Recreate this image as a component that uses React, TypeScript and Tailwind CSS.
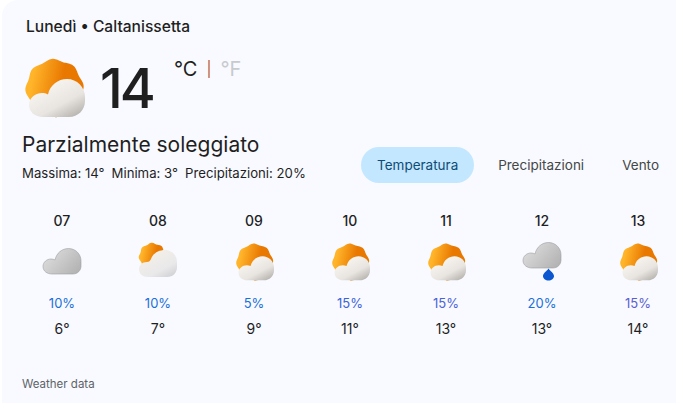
import React from "react";

const sunPath = (cx: number, cy: number, r: number, amp: number, lobes: number) => {
  const pts: string[] = [];
  for (let i = 0; i < 180; i++) {
    const t = (i / 180) * Math.PI * 2;
    const rr = r + amp * Math.cos(lobes * t + 0.6);
    pts.push(`${(cx + rr * Math.cos(t)).toFixed(2)} ${(cy + rr * Math.sin(t)).toFixed(2)}`);
  }
  return `M${pts.join("L")}Z`;
};

const CLOUD = "M18 59C10 59 4 54 4 47C4 40 10 35 17 35C19 35 21 35.4 23 36.5C25 27 33 21 42 21C52 21 60 29 60 39L60 43C60 52 53 59 44 59Z";

function Defs({ id }: { id: string }) {
  return (
    <defs>
      <linearGradient id={`${id}s`} x1="0.15" y1="0.2" x2="0.65" y2="0.3">
        <stop offset="0" stopColor="#ffb42a" />
        <stop offset="1" stopColor="#e97800" />
      </linearGradient>
      <linearGradient id={`${id}c`} x1="0.3" y1="0.15" x2="0.9" y2="0.9">
        <stop offset="0" stopColor="#f8f5f1" />
        <stop offset="0.6" stopColor="#e8e4df" />
        <stop offset="1" stopColor="#bbb8b4" />
      </linearGradient>
      <linearGradient id={`${id}g`} x1="0.1" y1="0.3" x2="0.95" y2="0.8">
        <stop offset="0" stopColor="#dadada" />
        <stop offset="1" stopColor="#b4b4b4" />
      </linearGradient>
      <linearGradient id={`${id}l`} x1="0.2" y1="0.1" x2="0.9" y2="1">
        <stop offset="0" stopColor="#f5f0e8" />
        <stop offset="0.65" stopColor="#e9e9ea" />
        <stop offset="1" stopColor="#cfd0d4" />
      </linearGradient>
    </defs>
  );
}

function PartlyCloudy({ id, className }: { id: string; className: string }) {
  return (
    <svg viewBox="0 0 60 60" className={className}>
      <Defs id={id} />
      <path d={sunPath(29.5, 30, 28.2, 1, 8)} fill={`url(#${id}s)`} />
      <path d={CLOUD} fill={`url(#${id}c)`} />
    </svg>
  );
}

function MostlySunnyCloud({ id }: { id: string }) {
  return (
    <svg viewBox="0 0 40 40" className="w-10 h-10">
      <Defs id={id} />
      <path d={sunPath(14.5, 14.5, 13.2, 0.6, 8)} fill={`url(#${id}s)`} />
      <path d="M10 35C4.5 35 1 31.5 1 27.5C1 23 4 20 9 20C11 20 12 19 13 17C15 11 21 8 27 8C34 8 39 13.5 39 20L39 25C39 31 35 35 29 35Z" fill={`url(#${id}l)`} />
    </svg>
  );
}

function GreyCloud({ id, rain }: { id: string; rain?: boolean }) {
  const y = rain ? 0 : 6;
  return (
    <svg viewBox="0 0 40 40" className="w-10 h-10">
      <Defs id={id} />
      <g transform={`translate(0 ${y})`}>
        <path
          d="M10 26C5 26 1 23 1 18.5C1 14 5 11 9 11C10.5 11 11.8 11.3 13 12C14.5 5 20 0.5 26.5 0.5C33.5 0.5 39 6 39 13L39 18C39 22.5 35.5 26 31 26Z"
          fill={`url(#${id}g)`}
          stroke="#9d9d9d"
          strokeWidth="0.6"
        />
      </g>
      {rain && <path d="M26.5 26.5C28 29 32 31 32 34C32 36.5 29.5 38.5 26.5 38.5C23.5 38.5 21 36.5 21 34C21 31 25 29 26.5 26.5Z" fill="#0b57d0" />}
    </svg>
  );
}

const ICON = "w-[38px] h-[38px] ml-[2px] mt-[1px]";

const hours = [
  { h: "07", p: "10%", t: "6°", c: "text-[#1a6fd8]", i: <GreyCloud id="a" /> },
  { h: "08", p: "10%", t: "7°", c: "text-[#1a6fd8]", i: <MostlySunnyCloud id="b" /> },
  { h: "09", p: "5%", t: "9°", c: "text-[#1a6fd8]", i: <PartlyCloudy id="c" className={ICON} /> },
  { h: "10", p: "15%", t: "11°", c: "text-[#3d62d8]", i: <PartlyCloudy id="d" className={ICON} /> },
  { h: "11", p: "15%", t: "13°", c: "text-[#4a62d8]", i: <PartlyCloudy id="e" className={ICON} /> },
  { h: "12", p: "20%", t: "13°", c: "text-[#1a6fd8]", i: <GreyCloud id="f" rain /> },
  { h: "13", p: "15%", t: "14°", c: "text-[#5a5fd0]", i: <PartlyCloudy id="g" className={ICON} /> },
];

export default function App() {
  return (
    <div className="w-[676px] h-[403px] bg-white pl-[2px] overflow-hidden font-['Inter',sans-serif] text-[#1f1f1f]">
      <div className="h-full bg-[#f8faff] rounded-tl-[16px] flex flex-col">
        <div className="pl-[24px] pt-[17px] h-[58px] text-[15.6px] font-medium leading-[20px]">Lunedì • Caltanissetta</div>
        <div className="flex h-[72px] pl-[23px]">
          <PartlyCloudy id="m" className="w-[60px] h-[60px]" />
          <div className="ml-[15px] text-[55px] leading-[60px] font-medium tracking-[-3px]">14</div>
          <div className="ml-[21px] text-[20px] leading-[22px] flex">
            <span className="text-[#1f1f1f]">°C</span>
            <span className="mx-[9px] text-[#b5561f] text-[15px]">|</span>
            <span className="text-[#c8cbce]">°F</span>
          </div>
        </div>
        <div className="flex justify-between pl-[20px] h-[70px]">
          <div>
            <div className="text-[21px] leading-[30px]">Parzialmente soleggiato</div>
            <div className="text-[13.2px] leading-[20px] mt-[3px] flex gap-[7px]">
              <span>Massima: 14°</span>
              <span>Minima: 3°</span>
              <span>Precipitazioni: 20%</span>
            </div>
          </div>
          <div className="flex items-start pt-[17px] pr-[17px] text-[13.5px] text-[#444746]">
            <div className="h-[36px] w-[113px] rounded-full bg-[#c2e7ff] text-[#0f4c75] flex items-center justify-center">Temperatura</div>
            <div className="h-[36px] ml-[24px] flex items-center">Precipitazioni</div>
            <div className="h-[36px] ml-[38px] flex items-center">Vento</div>
          </div>
        </div>
        <div className="flex pl-[12px] pt-[11px]">
          {hours.map((x) => (
            <div key={x.h} className="w-[96px] shrink-0 flex flex-col items-center">
              <div className="text-[14px] font-medium leading-[20px]">{x.h}</div>
              <div className="mt-[11px] h-10">{x.i}</div>
              <div className={`mt-[11px] text-[13px] leading-[20px] ${x.c}`}>{x.p}</div>
              <div className="mt-[6px] text-[14px] leading-[20px]">{x.t}</div>
            </div>
          ))}
        </div>
        <div className="pl-[20px] mt-[37px] text-[11.5px] leading-[16px] text-[#5f6368]">Weather data</div>
      </div>
    </div>
  );
}
